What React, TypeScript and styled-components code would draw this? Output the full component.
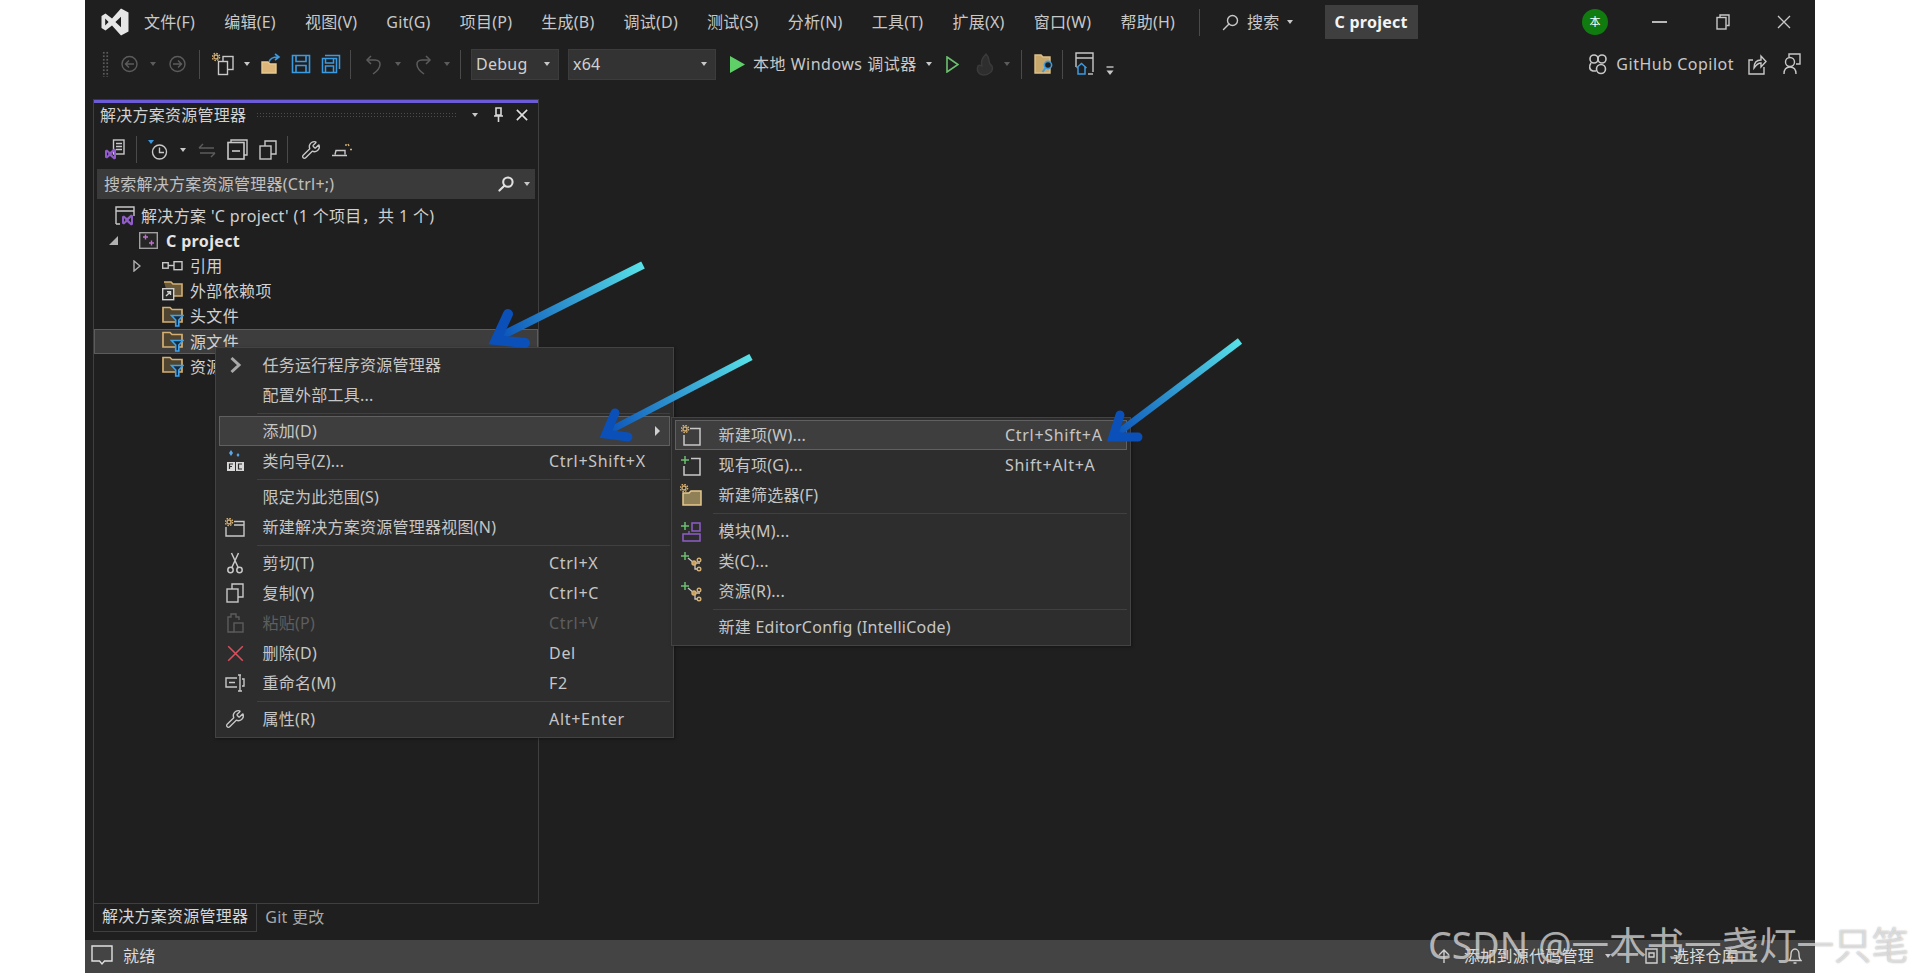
import React from "react";
import styled, {createGlobalStyle} from "styled-components";
import {Wrench} from "lucide-react";

const GlobalStyle = createGlobalStyle`
  html, body {
    margin: 0;
    padding: 0;
    background: #fff;
    overflow: hidden;
  }
  * { box-sizing: border-box; }
`;

const FONT = `"Noto Sans", "Noto Sans CJK SC", sans-serif`;
const LINE = "#c8c8c8";
const DIM = "#5c5c5c";
const BLUE = "#3c9ae0";
const TAN = "#d4b074";
const PURPLE = "#8f5cc8";
const GREEN = "#6cc070";

const Page = styled.div`
  position: relative;
  width: 1913px;
  height: 980px;
  overflow: hidden;
  background: #fff;
  font-family: ${FONT};
`;

const Window = styled.div`
  position: relative;
  margin-left: 85px;
  width: 1730px;
  height: 973px;
  background: #1f1f1f;
  color: #c8c8c8;
  font-size: 16px;
  line-height: 22px;
  letter-spacing: 0.25px;
  display: flex;
  flex-direction: column;
`;

const TitleBar = styled.div`
  height: 44px;
  flex: none;
  display: flex;
  align-items: center;
  padding: 0 24px 0 16px;
`;

const MenuBar = styled.nav`
  display: flex;
  margin-left: 15px;
  gap: 29px;
`;

const MenuLabel = styled.span`
  white-space: nowrap;
`;

const Slot = styled.span<{$ml?: number; $mt?: number}>`
  display: inline-flex;
  flex: none;
  align-items: center;
  margin-left: ${(p) => p.$ml ?? 0}px;
  margin-top: ${(p) => p.$mt ?? 0}px;
`;

const VSep = styled.span<{$ml: number; $h: number}>`
  flex: none;
  width: 1px;
  height: ${(p) => p.$h}px;
  margin-left: ${(p) => p.$ml}px;
  background: #4a4a4a;
`;

const Caret = styled.i<{$ml?: number; $c?: string; $mt?: number}>`
  flex: none;
  width: 0;
  height: 0;
  margin-left: ${(p) => p.$ml ?? 0}px;
  margin-top: ${(p) => p.$mt ?? 0}px;
  border-left: 3.5px solid transparent;
  border-right: 3.5px solid transparent;
  border-top: 4px solid ${(p) => p.$c ?? "#c8c8c8"};
`;

const ProjectBadge = styled.div`
  flex: none;
  margin-left: 32px;
  width: 93px;
  height: 34px;
  display: flex;
  align-items: center;
  justify-content: center;
  background: #3f3f3f;
  color: #f4f4f4;
  font-weight: 700;
`;

const Avatar = styled.div`
  flex: none;
  margin-left: auto;
  width: 26px;
  height: 26px;
  border-radius: 50%;
  background: #107c10;
  color: #fff;
  font-size: 11px;
  display: flex;
  align-items: center;
  justify-content: center;
`;

const ToolBar = styled.div`
  height: 40px;
  flex: none;
  display: flex;
  align-items: center;
  padding: 0 14px 0 17px;
`;

const Gripper = styled.span`
  flex: none;
  width: 7px;
  height: 26px;
  background-image: radial-gradient(#5a5a5a 1px, transparent 1.2px);
  background-size: 3.5px 3.5px;
`;

const Combo = styled.div<{$ml: number; $w: number}>`
  flex: none;
  margin-left: ${(p) => p.$ml}px;
  width: ${(p) => p.$w}px;
  height: 31px;
  background: #333333;
  border: 1px solid #3c3c3c;
  padding: 0 8px 0 4px;
  display: flex;
  align-items: center;
  justify-content: space-between;
  color: #d0d0d0;
`;

const RightCluster = styled.div`
  margin-left: auto;
  display: flex;
  align-items: center;
  color: #c8c8c8;
`;

const WideLatin = styled.span`
  letter-spacing: 0.5px;
  white-space: nowrap;
`;

const Main = styled.main`
  flex: 1;
  min-height: 0;
  display: flex;
  flex-direction: column;
  padding: 15px 0 8px 8px;
`;

const Panel = styled.section`
  flex: 1;
  width: 446px;
  border: 1px solid #3f3f3f;
  border-top-color: #3a3a3a;
  display: flex;
  flex-direction: column;
`;

const AccentStrip = styled.div`
  flex: none;
  height: 3px;
  background: #6b5bd6;
`;

const PanelTitle = styled.header`
  flex: none;
  height: 27px;
  display: flex;
  align-items: center;
  padding: 0 0 3px 6px;
  color: #d0d0d0;
`;

const Hatch = styled.span`
  flex: none;
  width: 201px;
  height: 7px;
  margin-left: 10px;
  background-image: radial-gradient(#4c4c4c 0.8px, transparent 1px);
  background-size: 3px 3px;
`;

const PanelTools = styled.div`
  flex: none;
  height: 39px;
  display: flex;
  align-items: center;
  padding-left: 11px;
`;

const SearchBox = styled.div`
  flex: none;
  height: 30px;
  margin: 0 3px;
  padding: 0 5px 0 7px;
  background: #3a3a3a;
  display: flex;
  align-items: center;
  color: #c0c0c0;
`;

const SearchLabel = styled.span`
  flex: 1;
  white-space: nowrap;
`;

const Tree = styled.ul`
  list-style: none;
  margin: 0;
  padding: 4px 0 0;
  letter-spacing: 0.35px;
`;

const TreeRow = styled.li<{$pad: number; $selected?: boolean; $bold?: boolean}>`
  height: 25.2px;
  padding-left: ${(p) => p.$pad}px;
  display: flex;
  align-items: center;
  white-space: nowrap;
  font-weight: ${(p) => (p.$bold ? 700 : 400)};
  color: ${(p) => (p.$bold ? "#e4e4e4" : "#d0d0d0")};
  background: ${(p) => (p.$selected ? "#3d3d3d" : "transparent")};
  box-shadow: ${(p) => (p.$selected ? "inset 0 0 0 1px #5c5c5c" : "none")};
`;

const Twist = styled.span<{$w: number}>`
  flex: none;
  width: ${(p) => p.$w}px;
  display: flex;
  align-items: center;
`;

const TreeIcon = styled.span<{$w: number}>`
  flex: none;
  width: ${(p) => p.$w}px;
  display: flex;
  align-items: center;
`;

const BottomTabs = styled.div`
  flex: none;
  height: 28px;
  display: flex;
  align-items: stretch;
`;

const BottomTab = styled.div<{$active?: boolean}>`
  padding: 0 8px 3px ${(p) => (p.$active ? 8 : 7)}px;
  display: flex;
  align-items: center;
  white-space: nowrap;
  color: ${(p) => (p.$active ? "#d6d6d6" : "#a8a8a8")};
  border: ${(p) => (p.$active ? "1px solid #3f3f3f" : "none")};
  border-top: none;
  margin-left: ${(p) => (p.$active ? 0 : 1)}px;
`;

const StatusBar = styled.footer`
  flex: none;
  height: 33px;
  background: #444444;
  color: #dcdcdc;
  display: flex;
  align-items: center;
  padding: 0 0 2px 6px;
`;

const StatusRight = styled.div`
  margin-left: auto;
  display: flex;
  align-items: center;
  padding-right: 13px;
`;

const PopupMenu = styled.div<{$left: number; $top: number; $w: number}>`
  position: absolute;
  left: ${(p) => p.$left}px;
  top: ${(p) => p.$top}px;
  width: ${(p) => p.$w}px;
  padding: 2px 3px 3px;
  background: #2d2d2d;
  border: 1px solid #434343;
  box-shadow: 1px 1px 3px rgba(0, 0, 0, 0.35);
`;

const PopupRow = styled.div<{$on?: boolean; $off?: boolean}>`
  height: 30px;
  display: grid;
  grid-template-columns: 43.5px 286.5px 1fr;
  align-items: center;
  white-space: nowrap;
  color: ${(p) => (p.$off ? "#5e5e5e" : "#c6c6c6")};
  background: ${(p) => (p.$on ? "#3e3e3e" : "transparent")};
  box-shadow: ${(p) => (p.$on ? "inset 0 0 0 1px #606060" : "none")};
`;

const RowIcon = styled.span`
  display: flex;
  align-items: center;
  justify-content: center;
  padding-right: 11px;
`;

const Shortcut = styled.span`
  letter-spacing: 0.7px;
`;

const SubArrow = styled.span`
  justify-self: end;
  margin-right: 10px;
  width: 0;
  height: 0;
  border-top: 5px solid transparent;
  border-bottom: 5px solid transparent;
  border-left: 5px solid #d0d0d0;
`;

const PopupSep = styled.div`
  height: 1px;
  margin: 2.5px 0 2.5px 38px;
  background: #404040;
`;

const Arrows = styled.svg`
  position: absolute;
  left: 0;
  top: 0;
  pointer-events: none;
`;

const Watermark = styled.div`
  position: absolute;
  left: 1428px;
  top: 921px;
  font-size: 37.5px;
  line-height: 48px;
  white-space: nowrap;
  color: rgba(255, 255, 255, 0.62);
  text-shadow: 0 0 1.5px rgba(70, 70, 70, 0.55);
`;

type IconProps = {w?: number; h?: number; children: React.ReactNode};
const Ic = ({w = 20, h = 20, children}: IconProps) => (
  <svg width={w} height={h} viewBox={`0 0 ${w} ${h}`} fill="none" strokeWidth={1.4}>
    {children}
  </svg>
);

const VsLogo = () => (
  <svg width="28" height="28" viewBox="0 0 28 28">
    <path
      fillRule="evenodd"
      fill="#e6e6e6"
      d="M20 0.5 L27.5 4.5 V23.5 L20 27.5 L11 17.5 L4.5 22.5 L0.5 20 V8 L4.5 5.5 L11 10.5 Z M4.2 10.5 V17.5 L7.6 14 Z M20 8.8 L14.4 14 L20 19.2 Z"
    />
  </svg>
);

const SearchGlass = ({c = LINE, w = 17}: {c?: string; w?: number}) => (
  <svg width={w} height={w} viewBox="0 0 17 17" fill="none" stroke={c} strokeWidth={w > 16 ? 1.4 : 2.2}>
    <circle cx="10.5" cy="6.5" r="5" />
    <path d="M7 10 L1.5 15.5" strokeLinecap="round" />
  </svg>
);

const CircleArrow = ({flip}: {flip?: boolean}) => (
  <Ic w={17} h={18}>
    <g stroke={DIM} transform={flip ? "translate(17 0) scale(-1 1)" : undefined}>
      <circle cx="8.5" cy="9" r="7.5" />
      <path d="M13 9 H4.5 M8 5.5 L4.5 9 L8 12.5" />
    </g>
  </Ic>
);

const Gear = ({x, y}: {x: number; y: number}) => (
  <g stroke={TAN} fill="none">
    <circle cx={x} cy={y} r="2" strokeWidth="1.3" />
    <circle cx={x} cy={y} r="3.6" strokeWidth="1.4" strokeDasharray="1.6 1.2" />
  </g>
);

const Plus = ({x, y, c = GREEN}: {x: number; y: number; c?: string}) => (
  <path d={`M${x - 4} ${y} H${x + 4} M${x} ${y - 4} V${y + 4}`} stroke={c} strokeWidth={1.5} />
);

const NewProjectIcon = () => (
  <Ic w={22} h={24}>
    <Gear x={4} y={5} />
    <rect x="11" y="4.5" width="10" height="13" stroke={LINE} />
    <rect x="6.5" y="9.5" width="9" height="13" fill="#1f1f1f" stroke={LINE} />
  </Ic>
);

const OpenIcon = () => (
  <Ic w={20} h={22}>
    <path d="M1 9 H7 L9 11 H15 V20 H1 Z" fill="#dcb67a" stroke="#e8c98e" />
    <path d="M8 9 C9 5 12 4 17 4 M14 1 L18 4 L14 7" stroke={BLUE} strokeWidth={1.6} />
  </Ic>
);

const SaveIcon = () => (
  <Ic w={20} h={20}>
    <path d="M1.5 1.5 H18.5 V18.5 H1.5 Z M5 1.5 V7.5 H15 V1.5 M5 18.5 V11.5 H15 V18.5" stroke={BLUE} strokeWidth={1.6} />
  </Ic>
);

const SaveAllIcon = () => (
  <Ic w={20} h={20}>
    <path d="M1.5 4.5 H15.5 V18.5 H1.5 Z M4.5 4.5 V9 H12.5 V4.5 M4.5 18.5 V12 H12.5 V18.5" stroke={BLUE} strokeWidth={1.5} />
    <path d="M4 1.5 H18.5 V15" stroke={BLUE} strokeWidth={1.5} />
  </Ic>
);

const UndoIcon = ({flip}: {flip?: boolean}) => (
  <Ic w={17} h={21}>
    <g stroke={DIM} strokeWidth={1.5} transform={flip ? "translate(17 0) scale(-1 1)" : undefined}>
      <path d="M2 6 H10 C17 6 17 14 8 20" />
      <path d="M6 2 L2 6 L6 10" />
    </g>
  </Ic>
);

const PlayIcon = () => (
  <svg width="15" height="17" viewBox="0 0 15 17">
    <path d="M0 0 L15 8.5 L0 17 Z" fill="#5fd068" />
  </svg>
);

const HollowPlayIcon = () => (
  <Ic w={13} h={17}>
    <path d="M1 1 L12 8.5 L1 16 Z" stroke={GREEN} strokeWidth={1.6} />
  </Ic>
);

const FlameIcon = () => (
  <Ic w={23} h={24}>
    <path d="M12 2 C18 8 12 10 18 14 C20 19 15 23 10 23 C5 23 2 19 4 14 C6 12 6 14 8 14 C6 9 9 5 12 2 Z" fill="#2e2e2e" stroke="#3a3a3a" />
  </Ic>
);

const FolderSearchIcon = () => (
  <Ic w={20} h={24}>
    <path d="M1 3 H7 L9 5 H16 V21 H1 Z" fill="#c9a86c" stroke="#dcc08a" />
    <circle cx="14" cy="13" r="3.6" fill="#1f1f1f" stroke={BLUE} strokeWidth={1.6} />
    <path d="M11.5 16 L8.5 20" stroke={BLUE} strokeWidth={1.8} />
  </Ic>
);

const HomeWindowIcon = () => (
  <Ic w={20} h={24}>
    <path d="M18 20 V1 H1 V15 M1 6 H18" stroke={LINE} />
    <path d="M1.5 16 L6.5 11.5 L11.5 16 M3 15 V22 H10 V15" stroke={BLUE} strokeWidth={1.5} />
    <path d="M13 22 H18" stroke={LINE} />
  </Ic>
);

const OverflowIcon = () => (
  <Ic w={8} h={10}>
    <path d="M0.5 1 H7.5" stroke={LINE} />
    <path d="M0.5 4.5 H7.5 L4 9 Z" fill={LINE} />
  </Ic>
);

const CopilotIcon = () => (
  <Ic w={20} h={22}>
    <g stroke={LINE} strokeWidth={1.6}>
      <circle cx="6" cy="6" r="4" />
      <circle cx="14" cy="6" r="4" />
      <path d="M3 10 C1 13 1 17 5 18 H8" />
      <circle cx="13" cy="16" r="4.5" fill="#1f1f1f" />
    </g>
  </Ic>
);

const ShareIcon = () => (
  <Ic w={19} h={22}>
    <path d="M5 7 H1 V21 H16 V14" stroke={LINE} />
    <path d="M6 15 C6 9 9 7 13 7 V3 L18 8.5 L13 14 V10 C10 10 8 12 6 15 Z" stroke={LINE} />
  </Ic>
);

const FeedbackIcon = () => (
  <Ic w={18} h={22}>
    <g stroke={LINE}>
      <path d="M6 4 V1 H17 V11 H13" />
      <circle cx="7" cy="9" r="4.5" fill="#1f1f1f" />
      <path d="M1 21 C1 16 3 14 7 14 C11 14 13 16 13 21" />
    </g>
  </Ic>
);

const RestoreIcon = () => (
  <Ic w={14} h={16}>
    <path d="M4 3.5 V1 H13 V11.5 H10.5" stroke={LINE} />
    <rect x="1" y="3.5" width="9" height="11.5" stroke={LINE} />
  </Ic>
);

const CloseGlyph = ({s = 14, c = LINE, sw = 1.3}: {s?: number; c?: string; sw?: number}) => (
  <svg width={s} height={s} viewBox="0 0 14 14" fill="none" stroke={c} strokeWidth={sw}>
    <path d="M1 1 L13 13 M13 1 L1 13" />
  </svg>
);

const PinIcon = () => (
  <Ic w={11} h={16}>
    <path d="M3 1 H8 V8 H3 Z M1 9 H10 M5.5 9 V15" stroke="#d8d8d8" strokeWidth={1.6} />
  </Ic>
);

const ReverseVs = ({x, y}: {x: number; y: number}) => (
  <path
    transform={`translate(${x} ${y})`}
    d="M0 2.5 L2 1.5 L5 4 L9 0.5 L11 1.5 V10.5 L9 11.5 L5 8 L2 10.5 L0 9.5 Z M2 4 V8 L3.5 6 Z M9 3.5 L6.5 6 L9 8.5 Z"
    fillRule="evenodd"
    fill={PURPLE}
  />
);

const PanelVsIcon = () => (
  <Ic w={20} h={22}>
    <rect x="8.5" y="1" width="10.5" height="14" stroke={LINE} />
    <path d="M11 4.5 H17 M11 7.5 H17 M11 10.5 H17" stroke={LINE} />
    <ReverseVs x={0} y={9} />
  </Ic>
);

const ClockFilterIcon = () => (
  <Ic w={20} h={22}>
    <path d="M0 1 H6 L3 5 Z" fill={BLUE} />
    <circle cx="11.5" cy="13" r="7" stroke={LINE} />
    <path d="M11.5 8.5 V13.5 H16" stroke={LINE} />
  </Ic>
);

const SyncIcon = () => (
  <Ic w={18} h={16}>
    <path d="M1 6 H16 M1 6 L5 2 M17 11 H2 M17 11 L13 15" stroke={DIM} strokeWidth={1.4} />
  </Ic>
);

const CollapseIcon = () => (
  <Ic w={21} h={21}>
    <path d="M4 3 V1 H20 V16 H17" stroke={LINE} />
    <rect x="1" y="3.5" width="16" height="16.5" stroke={LINE} strokeWidth={1.6} />
    <path d="M5 12 H13" stroke={LINE} strokeWidth={1.6} />
  </Ic>
);

const CopyDocsIcon = ({c = LINE, w = 18, h = 20}: {c?: string; w?: number; h?: number}) => (
  <svg width={w} height={h} viewBox="0 0 18 20" fill="none" stroke={c} strokeWidth={1.4}>
    <path d="M6 6 V1 H17 V14 H12" />
    <rect x="1" y="6" width="11" height="13" />
  </svg>
);

const PreviewIcon = () => (
  <Ic w={21} h={14}>
    <path d="M0 12.5 H15 M3 11.5 L4 7.5 H13 V11.5" stroke={LINE} strokeWidth={1.4} />
    <path d="M16 1 L17 3 M20 6.5 H18 M14 1 V3" stroke={TAN} strokeWidth={1.4} />
  </Ic>
);

const SolutionIcon = () => (
  <Ic w={20} h={20}>
    <path d="M1 18 V1 H19 V10 M1 5 H19 M1 18 H5" stroke={LINE} />
    <ReverseVs x={7} y={8} />
  </Ic>
);

const ProjectIcon = () => (
  <Ic w={19} h={17}>
    <rect x="0.7" y="0.7" width="17.6" height="15.6" stroke="#a0a0a0" fill="#262626" />
    <path d="M4 5 H9 M6.5 2.5 V7.5" stroke="#c070d0" strokeWidth={1.4} />
    <path d="M10 11 H15 M12.5 8.5 V13.5" stroke="#c070d0" strokeWidth={1.4} />
  </Ic>
);

const ReferenceIcon = () => (
  <Ic w={21} h={10}>
    <rect x="0.7" y="1.7" width="5.5" height="5.5" stroke={LINE} />
    <path d="M6 4.5 H12" stroke={LINE} />
    <rect x="12" y="0.7" width="8" height="8" stroke={LINE} />
  </Ic>
);

const DepsFolderIcon = () => (
  <Ic w={21} h={20}>
    <path d="M2 1 H9 L11 3 H20 V15 H6" fill="#6a5a3a" stroke={TAN} strokeWidth={1.6} />
    <rect x="0.7" y="7.7" width="11" height="11" fill="#2a2a2a" stroke="#d0d0d0" />
    <path d="M4 15 L8.5 10.7 M5 10.7 H8.5 V14" stroke="#d0d0d0" />
  </Ic>
);

const FilterFolderIcon = () => (
  <Ic w={22} h={21}>
    <path d="M1 16 V1.5 H8 L10 3.5 H20 V16 Z" fill="#4e4430" stroke={TAN} strokeWidth={1.7} />
    <path d="M9.500 9.500 H21 L16.800 14 V20 H13.700 V14 Z" fill="#1b2a38" stroke="#3fa2ea" strokeWidth={1.6} />
  </Ic>
);

const ChevronIcon = () => (
  <Ic w={13} h={18}>
    <path d="M2.5 2 L10 9 L2.5 16" stroke="#a8a8a8" strokeWidth={3} />
  </Ic>
);

const WizardIcon = () => (
  <Ic w={19} h={22}>
    <path d="M5 0 L7 3 L5 6 L3 3 Z M12 3 L13.5 5 L12 7 L10.500 5 Z" fill="#5aa6e6" />
    <rect x="1" y="12" width="8" height="9" fill="#d8d8d8" />
    <rect x="10" y="12" width="8" height="9" fill="#d8d8d8" />
    <path d="M3.500 19 V14 H7 M3.500 16.500 H6 M16 14 H12.500 V19 H16" stroke="#2d2d2d" strokeWidth={1.2} />
  </Ic>
);

const NewViewIcon = () => (
  <Ic w={20} h={19}>
    <Gear x={4} y={4} />
    <path d="M9 3.500 H19 V18 H1 V9 M9 7 H19" stroke={LINE} />
  </Ic>
);

const ScissorsIcon = () => (
  <Ic w={16} h={22}>
    <g stroke={LINE} strokeWidth={1.5}>
      <circle cx="3.500" cy="18" r="2.700" />
      <circle cx="12.500" cy="18" r="2.700" />
      <path d="M4.800 15.500 L11.500 1 M11.200 15.500 L4.500 1" />
    </g>
  </Ic>
);

const PasteIcon = () => (
  <Ic w={19} h={22}>
    <path d="M8 20 H2 V5 H5 V2 H10 V5 H13 V8" stroke={DIM} />
    <rect x="8" y="11" width="9" height="9" stroke={DIM} />
  </Ic>
);

const RenameIcon = () => (
  <Ic w={20} h={18}>
    <path d="M12 4 H1 V13 H12 M4 8.500 H10" stroke={LINE} />
    <path d="M13 1 H16 M13 17 H17 M15 1 V17 M17 5 H19 V12 H17" stroke={LINE} />
  </Ic>
);

const NewItemIcon = () => (
  <Ic w={20} h={21}>
    <Gear x={4} y={4} />
    <path d="M9 3.500 H19 V20 H3 V10" stroke={LINE} strokeWidth={1.5} />
  </Ic>
);

const ExistingItemIcon = () => (
  <Ic w={20} h={21}>
    <Plus x={4} y={5} />
    <path d="M10 3.500 H19 V20 H3 V11" stroke={LINE} strokeWidth={1.5} />
  </Ic>
);

const NewFilterIcon = () => (
  <Ic w={22} h={22}>
    <Gear x={4} y={4} />
    <path d="M3 9 H9 L11 7 H21 V21 H3 Z" fill="#8f8058" stroke="#e6c88a" strokeWidth={1.5} />
  </Ic>
);

const ModuleIcon = () => (
  <Ic w={20} h={21}>
    <Plus x={4} y={5} />
    <rect x="11" y="2" width="8" height="8" stroke={PURPLE} strokeWidth={1.5} />
    <rect x="2" y="13" width="17" height="7" stroke={PURPLE} strokeWidth={1.5} />
    <path d="M8 13 V10" stroke={PURPLE} />
  </Ic>
);

const ClassIcon = () => (
  <Ic w={21} h={21}>
    <Plus x={4} y={5} />
    <path d="M7 7 L13 12 M13 12 H19 M14 12 V18 H19" stroke={LINE} strokeWidth={1.3} />
    <circle cx="13" cy="12" r="2" fill="#c8a050" stroke={TAN} />
    <circle cx="18" cy="9" r="1.8" fill="#2d2d2d" stroke={TAN} />
    <circle cx="18" cy="18" r="1.8" fill="#2d2d2d" stroke={TAN} />
  </Ic>
);

const BubbleIcon = () => (
  <Ic w={22} h={21}>
    <path d="M1 1 H21 V16 H13.500 L11 19 L8.500 16 H1 Z" stroke="#e0e0e0" />
  </Ic>
);

const UpArrowIcon = () => (
  <Ic w={12} h={16}>
    <path d="M6 15 V2 M1 7 L6 2 L11 7" stroke="#d0d0d0" />
  </Ic>
);

const RepoIcon = () => (
  <Ic w={13} h={16}>
    <path d="M1 1 H12 V15 H1 Z M4 5 H9 V9 H4 Z" stroke="#d0d0d0" />
  </Ic>
);

const BellIcon = () => (
  <Ic w={14} h={18}>
    <path d="M1 13.500 C3 12 3 9 3 7 C3 4 5 2 7 2 C9 2 11 4 11 7 C11 9 11 12 13 13.500 Z M5.500 16 H8.500" stroke="#d0d0d0" />
  </Ic>
);

const menuItems = ["文件(F)", "编辑(E)", "视图(V)", "Git(G)", "项目(P)", "生成(B)", "调试(D)", "测试(S)", "分析(N)", "工具(T)", "扩展(X)", "窗口(W)", "帮助(H)"];

const App = () => {
  return (
    <Page>
      <GlobalStyle />
      <Window>
        <TitleBar>
          <VsLogo />
          <MenuBar>
            {menuItems.map((m) => (
              <MenuLabel key={m}>{m}</MenuLabel>
            ))}
          </MenuBar>
          <VSep $ml={24} $h={27} />
          <Slot $ml={22}>
            <SearchGlass />
          </Slot>
          <Slot $ml={8}>搜索</Slot>
          <Caret $ml={7} />
          <ProjectBadge>C project</ProjectBadge>
          <Avatar>本</Avatar>
          <Slot $ml={44}>
            <svg width="15" height="2">
              <rect width="15" height="2" fill="#b8b8b8" />
            </svg>
          </Slot>
          <Slot $ml={49}>
            <RestoreIcon />
          </Slot>
          <Slot $ml={47}>
            <CloseGlyph />
          </Slot>
        </TitleBar>

        <ToolBar>
          <Gripper />
          <Slot $ml={12}>
            <CircleArrow />
          </Slot>
          <Caret $ml={12} $c={DIM} />
          <Slot $ml={13}>
            <CircleArrow flip />
          </Slot>
          <VSep $ml={13} $h={29} />
          <Slot $ml={12}>
            <NewProjectIcon />
          </Slot>
          <Caret $ml={10} />
          <Slot $ml={11}>
            <OpenIcon />
          </Slot>
          <Slot $ml={10}>
            <SaveIcon />
          </Slot>
          <Slot $ml={10}>
            <SaveAllIcon />
          </Slot>
          <VSep $ml={9} $h={29} />
          <Slot $ml={14}>
            <UndoIcon />
          </Slot>
          <Caret $ml={13} $c={DIM} />
          <Slot $ml={14}>
            <UndoIcon flip />
          </Slot>
          <Caret $ml={12} $c={DIM} />
          <VSep $ml={10} $h={29} />
          <Combo $ml={10} $w={88}>
            Debug
            <Caret />
          </Combo>
          <Combo $ml={9} $w={148}>
            x64
            <Caret />
          </Combo>
          <Slot $ml={14}>
            <PlayIcon />
          </Slot>
          <Slot $ml={8}>
            <WideLatin>本地 Windows 调试器</WideLatin>
          </Slot>
          <Caret $ml={9} />
          <Slot $ml={14}>
            <HollowPlayIcon />
          </Slot>
          <Slot $ml={15}>
            <FlameIcon />
          </Slot>
          <Caret $ml={7} $c={DIM} />
          <VSep $ml={11} $h={29} />
          <Slot $ml={12}>
            <FolderSearchIcon />
          </Slot>
          <VSep $ml={8} $h={29} />
          <Slot $ml={12}>
            <HomeWindowIcon />
          </Slot>
          <Slot $ml={11} $mt={14}>
            <OverflowIcon />
          </Slot>
          <RightCluster>
            <CopilotIcon />
            <Slot $ml={8}>
              <WideLatin>GitHub Copilot</WideLatin>
            </Slot>
            <Slot $ml={14}>
              <ShareIcon />
            </Slot>
            <Slot $ml={16}>
              <FeedbackIcon />
            </Slot>
          </RightCluster>
        </ToolBar>

        <Main>
          <Panel>
            <AccentStrip />
            <PanelTitle>
              解决方案资源管理器
              <Hatch />
              <Caret $ml={15} />
              <Slot $ml={15}>
                <PinIcon />
              </Slot>
              <Slot $ml={12}>
                <CloseGlyph s={12} c="#e0e0e0" sw={1.8} />
              </Slot>
            </PanelTitle>
            <PanelTools>
              <PanelVsIcon />
              <VSep $ml={11} $h={27} />
              <Slot $ml={11}>
                <ClockFilterIcon />
              </Slot>
              <Caret $ml={12} />
              <Slot $ml={12}>
                <SyncIcon />
              </Slot>
              <Slot $ml={11}>
                <CollapseIcon />
              </Slot>
              <Slot $ml={11}>
                <CopyDocsIcon />
              </Slot>
              <VSep $ml={10} $h={27} />
              <Slot $ml={13}>
                <Wrench size={20} color={LINE} strokeWidth={1.6} />
              </Slot>
              <Slot $ml={11}>
                <PreviewIcon />
              </Slot>
            </PanelTools>
            <SearchBox>
              <SearchLabel>搜索解决方案资源管理器(Ctrl+;)</SearchLabel>
              <Slot>
                <SearchGlass w={16} c="#e0e0e0" />
              </Slot>
              <Caret $ml={10} />
            </SearchBox>
            <Tree>
              <TreeRow $pad={21}>
                <TreeIcon $w={26}>
                  <SolutionIcon />
                </TreeIcon>
                解决方案 'C project' (1 个项目，共 1 个)
              </TreeRow>
              <TreeRow $pad={15} $bold>
                <Twist $w={30}>
                  <svg width="9" height="9">
                    <path d="M9 0 V9 H0 Z" fill="#b0b0b0" />
                  </svg>
                </Twist>
                <TreeIcon $w={27}>
                  <ProjectIcon />
                </TreeIcon>
                C project
              </TreeRow>
              <TreeRow $pad={39}>
                <Twist $w={29}>
                  <svg width="8" height="12" fill="none">
                    <path d="M1 1 L7 6 L1 11 Z" stroke="#b0b0b0" strokeWidth="1.4" />
                  </svg>
                </Twist>
                <TreeIcon $w={28}>
                  <ReferenceIcon />
                </TreeIcon>
                引用
              </TreeRow>
              <TreeRow $pad={39}>
                <Twist $w={29} />
                <TreeIcon $w={28}>
                  <DepsFolderIcon />
                </TreeIcon>
                外部依赖项
              </TreeRow>
              <TreeRow $pad={39}>
                <Twist $w={29} />
                <TreeIcon $w={28}>
                  <FilterFolderIcon />
                </TreeIcon>
                头文件
              </TreeRow>
              <TreeRow $pad={39} $selected>
                <Twist $w={29} />
                <TreeIcon $w={28}>
                  <FilterFolderIcon />
                </TreeIcon>
                源文件
              </TreeRow>
              <TreeRow $pad={39}>
                <Twist $w={29} />
                <TreeIcon $w={28}>
                  <FilterFolderIcon />
                </TreeIcon>
                资源文件
              </TreeRow>
            </Tree>
          </Panel>
          <BottomTabs>
            <BottomTab $active>解决方案资源管理器</BottomTab>
            <BottomTab>Git 更改</BottomTab>
          </BottomTabs>
        </Main>

        <StatusBar>
          <BubbleIcon />
          <Slot $ml={10}>就绪</Slot>
          <StatusRight>
            <UpArrowIcon />
            <Slot $ml={14}>添加到源代码管理</Slot>
            <Caret $ml={11} />
            <Slot $ml={34}>
              <RepoIcon />
            </Slot>
            <Slot $ml={15}>选择仓库</Slot>
            <Caret $ml={13} />
            <Slot $ml={31}>
              <BellIcon />
            </Slot>
          </StatusRight>
        </StatusBar>

        <PopupMenu $left={130} $top={347} $w={459}>
          <PopupRow>
            <RowIcon>
              <ChevronIcon />
            </RowIcon>
            任务运行程序资源管理器
          </PopupRow>
          <PopupRow>
            <span />
            配置外部工具...
          </PopupRow>
          <PopupSep />
          <PopupRow $on>
            <span />
            添加(D)
            <SubArrow />
          </PopupRow>
          <PopupRow>
            <RowIcon>
              <WizardIcon />
            </RowIcon>
            <span>类向导(Z)...</span>
            <Shortcut>Ctrl+Shift+X</Shortcut>
          </PopupRow>
          <PopupSep />
          <PopupRow>
            <span />
            限定为此范围(S)
          </PopupRow>
          <PopupRow>
            <RowIcon>
              <NewViewIcon />
            </RowIcon>
            新建解决方案资源管理器视图(N)
          </PopupRow>
          <PopupSep />
          <PopupRow>
            <RowIcon>
              <ScissorsIcon />
            </RowIcon>
            <span>剪切(T)</span>
            <Shortcut>Ctrl+X</Shortcut>
          </PopupRow>
          <PopupRow>
            <RowIcon>
              <CopyDocsIcon w={20} h={20} />
            </RowIcon>
            <span>复制(Y)</span>
            <Shortcut>Ctrl+C</Shortcut>
          </PopupRow>
          <PopupRow $off>
            <RowIcon>
              <PasteIcon />
            </RowIcon>
            <span>粘贴(P)</span>
            <Shortcut>Ctrl+V</Shortcut>
          </PopupRow>
          <PopupRow>
            <RowIcon>
              <CloseGlyph s={17} c="#d8505e" sw={1.3} />
            </RowIcon>
            <span>删除(D)</span>
            <Shortcut>Del</Shortcut>
          </PopupRow>
          <PopupRow>
            <RowIcon>
              <RenameIcon />
            </RowIcon>
            <span>重命名(M)</span>
            <Shortcut>F2</Shortcut>
          </PopupRow>
          <PopupSep />
          <PopupRow>
            <RowIcon>
              <Wrench size={20} color={LINE} strokeWidth={1.6} />
            </RowIcon>
            <span>属性(R)</span>
            <Shortcut>Alt+Enter</Shortcut>
          </PopupRow>
        </PopupMenu>

        <PopupMenu $left={586} $top={417} $w={460}>
          <PopupRow $on>
            <RowIcon>
              <NewItemIcon />
            </RowIcon>
            <span>新建项(W)...</span>
            <Shortcut>Ctrl+Shift+A</Shortcut>
          </PopupRow>
          <PopupRow>
            <RowIcon>
              <ExistingItemIcon />
            </RowIcon>
            <span>现有项(G)...</span>
            <Shortcut>Shift+Alt+A</Shortcut>
          </PopupRow>
          <PopupRow>
            <RowIcon>
              <NewFilterIcon />
            </RowIcon>
            新建筛选器(F)
          </PopupRow>
          <PopupSep />
          <PopupRow>
            <RowIcon>
              <ModuleIcon />
            </RowIcon>
            模块(M)...
          </PopupRow>
          <PopupRow>
            <RowIcon>
              <ClassIcon />
            </RowIcon>
            类(C)...
          </PopupRow>
          <PopupRow>
            <RowIcon>
              <ClassIcon />
            </RowIcon>
            资源(R)...
          </PopupRow>
          <PopupSep />
          <PopupRow>
            <span />
            新建 EditorConfig (IntelliCode)
          </PopupRow>
        </PopupMenu>
      </Window>

      <Arrows width="1913" height="980" viewBox="0 0 1913 980" fill="none">
        <defs>
          <linearGradient id="a1" gradientUnits="userSpaceOnUse" x1="643" y1="265" x2="497" y2="338">
            <stop offset="0" stopColor="#58e2e8" />
            <stop offset="1" stopColor="#0a50b8" />
          </linearGradient>
          <linearGradient id="a2" gradientUnits="userSpaceOnUse" x1="751" y1="357" x2="604" y2="433">
            <stop offset="0" stopColor="#58e2e8" />
            <stop offset="1" stopColor="#0a50b8" />
          </linearGradient>
          <linearGradient id="a3" gradientUnits="userSpaceOnUse" x1="1240" y1="341" x2="1112" y2="437">
            <stop offset="0" stopColor="#58e2e8" />
            <stop offset="1" stopColor="#0a50b8" />
          </linearGradient>
        </defs>
        <path d="M643 265 L497 338" stroke="url(#a1)" strokeWidth="8" />
        <path d="M508 314 L496 340 L525 343" stroke="#0a50b8" strokeWidth="10" strokeLinecap="round" />
        <path d="M751 357 L607 432" stroke="url(#a2)" strokeWidth="7" />
        <path d="M615 413 L606 434 L628 437" stroke="#0a50b8" strokeWidth="9" strokeLinecap="round" />
        <path d="M1240 341 L1114 436" stroke="url(#a3)" strokeWidth="7" />
        <path d="M1120 415 L1113 437 L1138 437" stroke="#0a50b8" strokeWidth="9" strokeLinecap="round" />
      </Arrows>

      <Watermark>CSDN @一本书一盏灯一只笔</Watermark>
    </Page>
  );
};

export default App;
